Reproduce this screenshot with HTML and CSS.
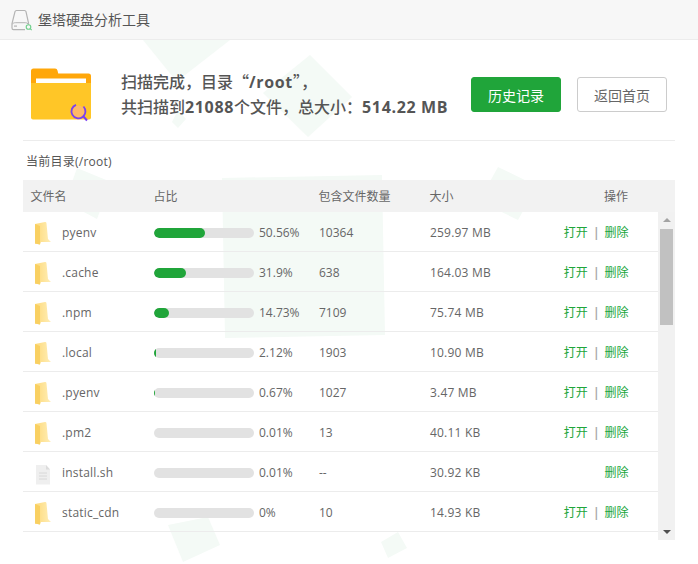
FILE: index.html
```html
<!DOCTYPE html>
<html lang="zh">
<head>
<meta charset="utf-8">
<title>堡塔硬盘分析工具</title>
<link rel="stylesheet" href="styles.css">
</head>
<body>
<svg class="watermark" width="698" height="564" viewBox="0 0 698 564">
  <g fill="#f4faf6">
    <polygon points="143,40 230,40 185,75 173,77"/>
    <polygon points="172,122 178,128 186,119 178,110"/>
    <polygon points="310,55 352,97 308,137 263,93"/>
    <polygon points="222,178 382,175 385,335 225,338"/>
    <polygon points="498,167 537,186 518,220 479,201"/>
    <polygon points="77,168 111,182 97,219 65,202"/>
    <polygon points="168,525 208,517 220,545 183,562"/>
    <polygon points="381,542 398,532 407,548 388,558"/>
  </g>
</svg>
<header class="topbar">
  <svg class="logo" width="22" height="22" viewBox="0 0 22 22">
    <path d="M5.500 1.500h8c.8 0 1.300.4 1.500 1.200L17.500 14v1.500M5.500 1.500c-.8 0-1.300.4-1.500 1.200L1 14.500v4.500c0 1 .7 1.600 1.500 1.600H14" fill="none" stroke="#b4b4b4" stroke-width="1.200"/>
    <path d="M1.300 15c1-1 2-1.300 3-1.300h10c1 0 2 .4 3 1.300" fill="none" stroke="#b4b4b4" stroke-width="1"/>
    <rect x="3" y="16.500" width="3" height="1.200" fill="#b4b4b4"/>
    <circle cx="17.500" cy="18" r="2.300" fill="none" stroke="#6fcf8a" stroke-width="1.100"/>
    <path d="M19.200 19.700l1.500 1.500" stroke="#6fcf8a" stroke-width="1.100"/>
  </svg>
  <span class="app-title">堡塔硬盘分析工具</span>
</header>
<main class="page">
  <section class="summary">
    <div class="summary-main">
      <svg class="big-folder" width="60" height="52" viewBox="0 0 60 52">
        <path d="M0 3a2.500 2.500 0 0 1 2.500-2.500H24a2.500 2.500 0 0 1 2.500 2l.7 3h30.300a2.500 2.500 0 0 1 2.500 2.500v12H0z" fill="#ffa70a"/>
        <rect x="5" y="10.500" width="50" height="5" fill="#fff"/>
        <path d="M0 15h60v34.500a2 2 0 0 1-2 2H2a2 2 0 0 1-2-2z" fill="#ffc627"/>
        <circle cx="47.500" cy="43.500" r="6" fill="#ffb866"/>
        <path d="M45 36.800a7 7 0 1 0 7.500 1.700" fill="none" stroke="#7a3ff2" stroke-width="1.800"/>
        <path d="M52.500 48.500l3.500 4" stroke="#7a3ff2" stroke-width="2"/>
      </svg>
      <div class="summary-text">
        <div>扫描完成，目录<span class="cjk">“</span><b>/root</b><span class="cjk">”</span>，</div>
        <div>共扫描到<b>21088</b>个文件，总大小：<b>514.22 MB</b></div>
      </div>
    </div>
    <div class="actions">
      <button class="btn btn-primary">历史记录</button>
      <button class="btn btn-default">返回首页</button>
    </div>
  </section>
  <div class="crumb">当前目录(/root)</div>
  <div class="thead grid">
    <span>文件名</span><span>占比</span><span>包含文件数量</span><span>大小</span><span class="op">操作</span>
  </div>
  <div class="tbody">
    <div class="rows">
      <div class="row grid">
        <div class="name"><svg class="i-folder"><use href="#folder"/></svg>pyenv</div>
        <div class="ratio"><div class="track"><div class="fill" style="width:50.56%"></div></div>50.56%</div>
        <div>10364</div><div class="size">259.97 MB</div>
        <div class="op"><a>打开</a><i>|</i><a>删除</a></div>
      </div>
      <div class="row grid">
        <div class="name"><svg class="i-folder"><use href="#folder"/></svg>.cache</div>
        <div class="ratio"><div class="track"><div class="fill" style="width:31.9%"></div></div>31.9%</div>
        <div>638</div><div class="size">164.03 MB</div>
        <div class="op"><a>打开</a><i>|</i><a>删除</a></div>
      </div>
      <div class="row grid">
        <div class="name"><svg class="i-folder"><use href="#folder"/></svg>.npm</div>
        <div class="ratio"><div class="track"><div class="fill" style="width:14.73%"></div></div>14.73%</div>
        <div>7109</div><div class="size">75.74 MB</div>
        <div class="op"><a>打开</a><i>|</i><a>删除</a></div>
      </div>
      <div class="row grid">
        <div class="name"><svg class="i-folder"><use href="#folder"/></svg>.local</div>
        <div class="ratio"><div class="track"><div class="fill" style="width:2.12%"></div></div>2.12%</div>
        <div>1903</div><div class="size">10.90 MB</div>
        <div class="op"><a>打开</a><i>|</i><a>删除</a></div>
      </div>
      <div class="row grid">
        <div class="name"><svg class="i-folder"><use href="#folder"/></svg>.pyenv</div>
        <div class="ratio"><div class="track"><div class="fill" style="width:0.67%"></div></div>0.67%</div>
        <div>1027</div><div class="size">3.47 MB</div>
        <div class="op"><a>打开</a><i>|</i><a>删除</a></div>
      </div>
      <div class="row grid">
        <div class="name"><svg class="i-folder"><use href="#folder"/></svg>.pm2</div>
        <div class="ratio"><div class="track"><div class="fill" style="width:0.01%"></div></div>0.01%</div>
        <div>13</div><div class="size">40.11 KB</div>
        <div class="op"><a>打开</a><i>|</i><a>删除</a></div>
      </div>
      <div class="row grid">
        <div class="name"><svg class="i-folder" viewBox="0 0 16 23"><path d="M1 3h10l4 4.500V22.500H1z" fill="#efefef"/><path d="M11 3l4 4.500h-4z" fill="#dcdcdc"/><path d="M4 11h8M4 14h8M4 17h8" stroke="#d8d8d8" stroke-width="1"/></svg>install.sh</div>
        <div class="ratio"><div class="track"><div class="fill" style="width:0.01%"></div></div>0.01%</div>
        <div>--</div><div class="size">30.92 KB</div>
        <div class="op"><a>删除</a></div>
      </div>
      <div class="row grid">
        <div class="name"><svg class="i-folder"><use href="#folder"/></svg>static_cdn</div>
        <div class="ratio"><div class="track"><div class="fill" style="width:0%"></div></div>0%</div>
        <div>10</div><div class="size">14.93 KB</div>
        <div class="op"><a>打开</a><i>|</i><a>删除</a></div>
      </div>
    </div>
    <div class="scrollbar">
      <span class="arrow arrow-up"></span>
      <span class="thumb"></span>
      <span class="arrow arrow-down"></span>
    </div>
  </div>
</main>
<svg class="defs" width="0" height="0">
  <defs>
    <linearGradient id="fg" x1="0" y1="0" x2="1" y2="0">
      <stop offset="0" stop-color="#fdd978"/><stop offset="1" stop-color="#ffeeb8"/>
    </linearGradient>
    <symbol id="folder" viewBox="0 0 16 23">
      <path d="M0 2l10-2c1 0 1.500.5 1.500 1.500L13 17l3 3H6l-1 2.500-5-1z" fill="url(#fg)"/>
      <path d="M0 2v19.500l5 1V4z" fill="#f9d062"/>
    </symbol>
  </defs>
</svg>
</body>
</html>
```
FILE: styles.css
```css
* { box-sizing: border-box; }
html, body { margin: 0; padding: 0; }
body {
  width: 698px;
  height: 564px;
  overflow: hidden;
  position: relative;
  background: #fff;
  color: #666;
  font: 12px/1.4 "Open Sans", "Noto Sans CJK SC", sans-serif;
}
.watermark { position: absolute; left: 0; top: 0; z-index: 0; }
.defs { position: absolute; }
.topbar {
  position: relative;
  height: 40px;
  display: flex;
  align-items: center;
  padding-left: 11px;
  background: #f7f7f7;
  border-bottom: 1px solid #ececec;
}
.logo { margin-right: 5px; }
.app-title { font-size: 14px; color: #555; }
.page { position: relative; padding: 0 23px; }
.summary {
  height: 101px;
  display: flex;
  justify-content: space-between;
  align-items: center;
  border-bottom: 1px solid #ececec;
  padding: 9px 8px 0;
}
.summary-main { display: flex; align-items: center; }
.big-folder { margin: 0 30px 2px 0; overflow: visible; }
.summary-text { font-size: 16px; line-height: 25px; font-weight: 500; color: #555; }
.summary-text b { font-weight: 700; letter-spacing: .65px; }
.summary-text .cjk { font-family: "Noto Sans CJK SC", sans-serif; }
.actions { display: flex; gap: 16px; }
.btn {
  width: 90px;
  height: 35px;
  border-radius: 3px;
  font: 14px "Open Sans", "Noto Sans CJK SC", sans-serif;
  padding: 0;
}
.btn-primary { background: #20a53a; border: 1px solid #20a53a; color: #fff; }
.btn-default { background: #fff; border: 1px solid #ccc; color: #666; }
.crumb { height: 39px; padding: 13px 3px 0; font-size: 12px; line-height: 16px; color: #555; letter-spacing: .25px; }
.grid {
  display: grid;
  grid-template-columns: 123px 165px 111px 130px 68.5px;
  align-items: center;
}
.thead {
  height: 32px;
  padding: 3px 0 0 7.5px;
  background: #f2f2f2;
  color: #666;
}
.op { text-align: right; white-space: nowrap; }
.tbody { display: flex; height: 328px; }
.rows { flex: 1; overflow: hidden; }
.row {
  height: 40px;
  padding: 3px 0 0 8px;
  border-bottom: 1px solid #ececec;
}
.name { display: flex; align-items: center; color: #666; letter-spacing: .2px; }
.size { letter-spacing: .2px; }
.i-folder { width: 16px; height: 23px; margin: 0 11px 0 4px; flex: none; }
.ratio { display: flex; align-items: center; white-space: nowrap; }
.track {
  width: 100px;
  height: 10px;
  margin-right: 5px;
  border-radius: 5px;
  background: #e2e2e2;
  overflow: hidden;
  flex: none;
}
.fill { height: 100%; border-radius: 5px; background: #20a53a; }
.row .op a { color: #20a53a; }
.row .op i { font-style: normal; font-weight: 700; margin: 0 5px; color: #aaa; }
.scrollbar {
  width: 17px;
  flex: none;
  background: #f1f1f1;
  display: flex;
  flex-direction: column;
  align-items: center;
  position: relative;
}
.arrow { width: 0; height: 0; border: 4px solid transparent; flex: none; }
.arrow-up { border-bottom: 4px solid #a3a3a3; border-top: 0; margin-top: 6px; }
.arrow-down { border-top: 4px solid #505050; border-bottom: 0; margin-top: auto; margin-bottom: 6px; }
.thumb { width: 13px; height: 96px; margin-top: 7px; background: #c1c1c1; flex: none; }
```
